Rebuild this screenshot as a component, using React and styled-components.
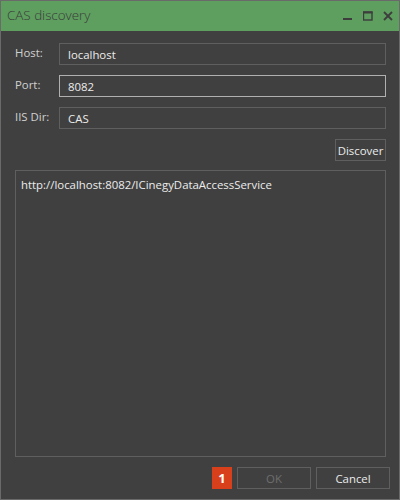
import React from 'react';
import styled, { createGlobalStyle } from 'styled-components';

const Global = createGlobalStyle`
  html, body {
    margin: 0;
    padding: 0;
    background: #404040;
  }
  * { box-sizing: border-box; }
`;

const Window = styled.div`
  width: 400px;
  height: 500px;
  border: 1px solid #6a6a6a;
  background: #404040;
  display: flex;
  flex-direction: column;
  font-family: "Segoe UI", "Open Sans", sans-serif;
  font-size: 11.4px;
  color: #e6e6e6;
`;

const TitleBar = styled.div`
  height: 30px;
  background: #5e9f5f;
  display: flex;
  align-items: center;
  padding: 0 6px 0 6px;
  flex-shrink: 0;
`;

const Title = styled.div`
  flex: 1;
  font-size: 13.4px;
  font-weight: 300;
  color: #3a3a3a;
  margin-top: -2px;
`;

const TitleButtons = styled.div`
  display: flex;
  gap: 10px;
  align-items: center;
`;

const Body = styled.div`
  flex: 1;
  display: flex;
  flex-direction: column;
  padding: 12px 13px 0 14px;
  min-height: 0;
`;

const FormGrid = styled.div`
  display: grid;
  grid-template-columns: 44px 1fr;
  row-gap: 10px;
`;

const Label = styled.div`
  color: #d0d0d0;
  padding-top: 2px;
`;

const Input = styled.div`
  height: 22px;
  border: 1px solid ${p => (p.$focused ? '#b0b0b0' : '#5f5f5f')};
  padding: 0 8px;
  display: flex;
  align-items: center;
  color: #ececec;
`;

const DiscoverRow = styled.div`
  display: flex;
  justify-content: flex-end;
  margin-top: 10px;
`;

const Button = styled.div`
  height: 22px;
  border: 1px solid #5f5f5f;
  display: flex;
  align-items: center;
  justify-content: center;
  color: ${p => (p.$disabled ? '#6e6e6e' : '#ececec')};
  width: ${p => p.$w}px;
`;

const Output = styled.div`
  flex: 1;
  margin-top: 9px;
  border: 1px solid #5f5f5f;
  padding: 6px 5px;
  color: #ececec;
`;

const Footer = styled.div`
  display: flex;
  justify-content: flex-end;
  align-items: center;
  gap: 5px;
  padding: 10px 9px 10px 0;
`;

const Badge = styled.div`
  width: 20px;
  height: 22px;
  background: #d8401c;
  color: #fff;
  font-weight: 700;
  font-size: 13px;
  display: flex;
  align-items: center;
  justify-content: center;
`;

const WinIcon = ({ type }) => (
  <svg width="10" height="10" viewBox="0 0 10 10">
    {type === 'min' && <rect x="0" y="7" width="9" height="2" fill="#3d3d3d" />}
    {type === 'max' && (
      <g fill="none" stroke="#3d3d3d">
        <rect x="0.5" y="1" width="8.5" height="8" strokeWidth="1.4" />
        <line x1="0" y1="1.5" x2="9.5" y2="1.5" strokeWidth="2" />
      </g>
    )}
    {type === 'close' && (
      <g stroke="#3d3d3d" strokeWidth="1.8">
        <line x1="1" y1="1" x2="9" y2="9" />
        <line x1="9" y1="1" x2="1" y2="9" />
      </g>
    )}
  </svg>
);

export default function App() {
  return (
    <>
      <Global />
      <Window>
        <TitleBar>
          <Title>CAS discovery</Title>
          <TitleButtons>
            <WinIcon type="min" />
            <WinIcon type="max" />
            <WinIcon type="close" />
          </TitleButtons>
        </TitleBar>
        <Body>
          <FormGrid>
            <Label>Host:</Label>
            <Input>localhost</Input>
            <Label>Port:</Label>
            <Input $focused>8082</Input>
            <Label>IIS Dir:</Label>
            <Input>CAS</Input>
          </FormGrid>
          <DiscoverRow>
            <Button $w={51}>Discover</Button>
          </DiscoverRow>
          <Output>http://localhost:8082/ICinegyDataAccessService</Output>
        </Body>
        <Footer>
          <Badge>1</Badge>
          <Button $w={74} $disabled>OK</Button>
          <Button $w={74}>Cancel</Button>
        </Footer>
      </Window>
    </>
  );
}
